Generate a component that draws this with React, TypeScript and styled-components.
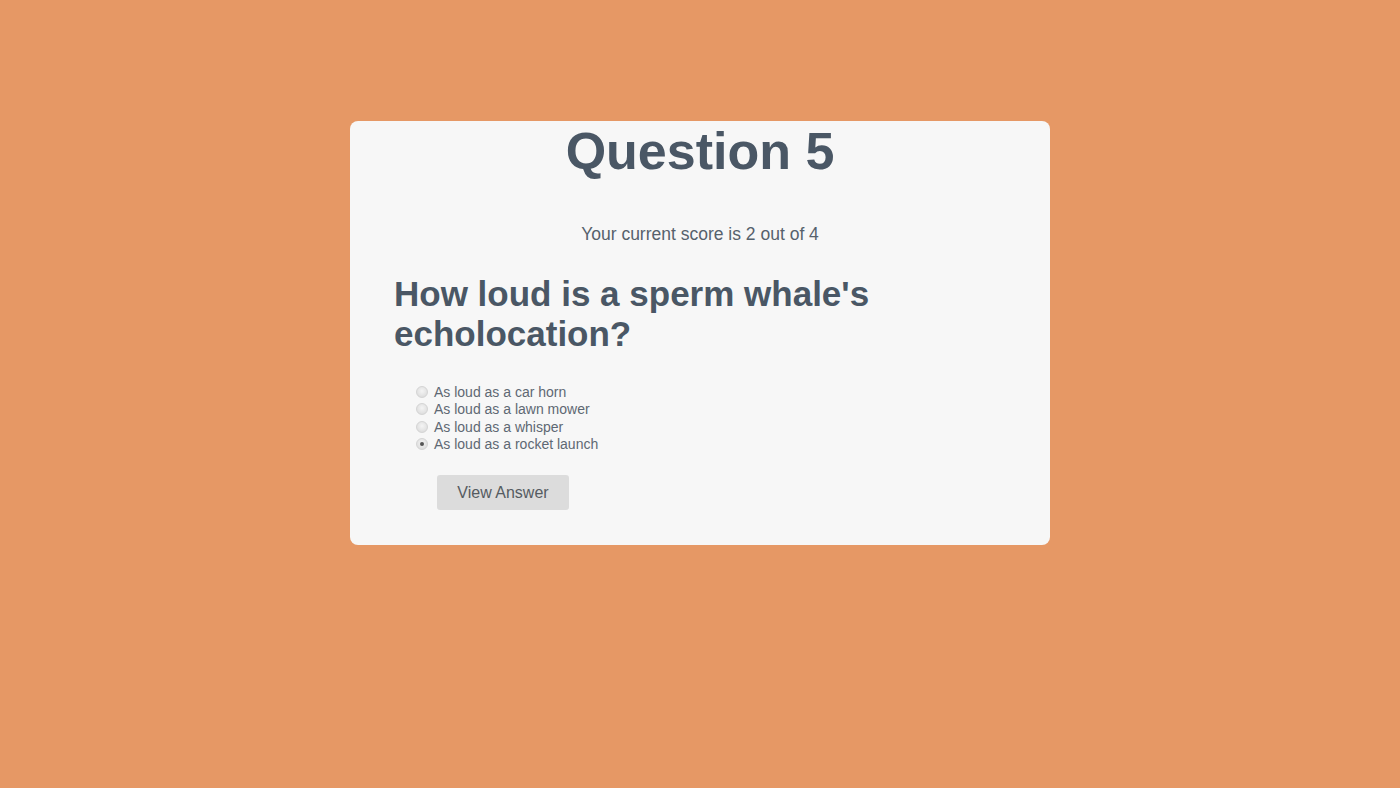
import React, { useState } from "react";
import styled, { createGlobalStyle } from "styled-components";

const GlobalStyle = createGlobalStyle`
  html, body {
    margin: 0;
    padding: 0;
    background: #e69865;
    font-family: "Liberation Sans", Arial, sans-serif;
  }
`;

const Page = styled.div`
  min-height: 788px;
  display: flex;
  justify-content: center;
  align-items: flex-start;
  padding-top: 121px;
  box-sizing: border-box;
`;

const Card = styled.div`
  width: 700px;
  background: #f7f7f7;
  border-radius: 8px;
  padding: 0 44px 35px;
  box-sizing: border-box;
  color: #4a5765;
`;

const Title = styled.h1`
  margin: 0;
  text-align: center;
  font-size: 52px;
  line-height: 60px;
  font-weight: bold;
  color: #4a5765;
`;

const Score = styled.p`
  margin: 43px 0 0;
  text-align: center;
  font-size: 17.5px;
  line-height: 20px;
  color: #56616c;
`;

const Question = styled.h2`
  margin: 30px 0 0;
  font-size: 35px;
  line-height: 40px;
  font-weight: bold;
  color: #4a5765;
  max-width: 520px;
`;

const Options = styled.div`
  margin-top: 29px;
  padding-left: 22px;
  display: flex;
  flex-direction: column;
`;

const Option = styled.label`
  display: flex;
  align-items: center;
  height: 17.5px;
  font-size: 14px;
  color: #5e6873;
  cursor: pointer;
`;

const Radio = styled.input`
  appearance: none;
  -webkit-appearance: none;
  width: 12px;
  height: 12px;
  margin: 0 6px 0 0;
  border-radius: 50%;
  border: 1px solid #d4d4d4;
  background: radial-gradient(circle at 50% 40%, #f4f4f4 0%, #e0e0e0 70%, #d4d4d4 100%);
  position: relative;
  box-sizing: border-box;
  flex: none;

  &:checked::after {
    content: "";
    position: absolute;
    left: 3px;
    top: 3px;
    width: 4px;
    height: 4px;
    border-radius: 50%;
    background: #555;
  }
`;

const Button = styled.button`
  margin: 22px 0 0 43px;
  background: #dcdcdc;
  border: none;
  border-radius: 3px;
  width: 132px;
  height: 35px;
  padding: 0;
  font-family: "Liberation Sans", Arial, sans-serif;
  font-size: 16px;
  color: #555b61;
  cursor: pointer;
`;

const answers = [
  "As loud as a car horn",
  "As loud as a lawn mower",
  "As loud as a whisper",
  "As loud as a rocket launch",
];

export default function App() {
  const [selected, setSelected] = useState(3);
  return (
    <>
      <GlobalStyle />
      <Page>
        <Card>
          <Title>Question 5</Title>
          <Score>Your current score is 2 out of 4</Score>
          <Question>How loud is a sperm whale's echolocation?</Question>
          <Options>
            {answers.map((a, i) => (
              <Option key={a}>
                <Radio
                  type="radio"
                  name="answer"
                  checked={selected === i}
                  onChange={() => setSelected(i)}
                />
                {a}
              </Option>
            ))}
          </Options>
          <Button>View Answer</Button>
        </Card>
      </Page>
    </>
  );
}
